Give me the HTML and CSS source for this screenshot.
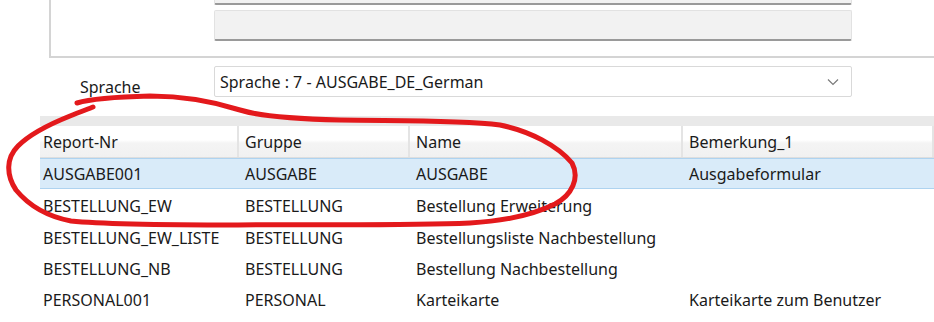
FILE: index.html
```html
<!DOCTYPE html>
<html lang="de">
<head>
<meta charset="utf-8">
<title>Report-Auswahl</title>
<link rel="stylesheet" href="styles.css">
</head>
<body>
<div class="page">
  <div class="panel">
    <div class="field field-top"></div>
    <div class="field"></div>
  </div>

  <div class="lang-row">
    <div class="lang-label">Sprache</div>
    <div class="combo">
      <span class="combo-text">Sprache : 7 - AUSGABE_DE_German</span>
      <svg class="chev" width="12" height="8" viewBox="0 0 12 8"><path d="M1 1.5 L6 6.5 L11 1.5" fill="none" stroke="#7a7a7a" stroke-width="1.2"/></svg>
    </div>
  </div>

  <div class="grid">
    <div class="grid-top"></div>
    <div class="row head">
      <div class="cell">Report-Nr</div>
      <div class="cell">Gruppe</div>
      <div class="cell">Name</div>
      <div class="cell">Bemerkung_1</div>
    </div>
    <div class="row sel">
      <div class="cell">AUSGABE001</div>
      <div class="cell">AUSGABE</div>
      <div class="cell">AUSGABE</div>
      <div class="cell">Ausgabeformular</div>
    </div>
    <div class="row body-row">
      <div class="cell">BESTELLUNG_EW</div>
      <div class="cell">BESTELLUNG</div>
      <div class="cell">Bestellung Erweiterung</div>
      <div class="cell"></div>
    </div>
    <div class="row body-row">
      <div class="cell">BESTELLUNG_EW_LISTE</div>
      <div class="cell">BESTELLUNG</div>
      <div class="cell">Bestellungsliste Nachbestellung</div>
      <div class="cell"></div>
    </div>
    <div class="row body-row">
      <div class="cell">BESTELLUNG_NB</div>
      <div class="cell">BESTELLUNG</div>
      <div class="cell">Bestellung Nachbestellung</div>
      <div class="cell"></div>
    </div>
    <div class="row body-row">
      <div class="cell">PERSONAL001</div>
      <div class="cell">PERSONAL</div>
      <div class="cell">Karteikarte</div>
      <div class="cell">Karteikarte zum Benutzer</div>
    </div>
  </div>

  <svg class="markup" width="934" height="322" viewBox="0 0 934 322">
    <path d="M77 103 C 90 99, 110 97, 150 96 C 185 96, 215 102, 240 110 C 262 117, 300 119, 340 120 C 400 121, 460 120, 500 125 C 530 131, 558 146, 572 163 C 580 178, 572 195, 555 204 C 535 214, 505 221, 470 223 C 400 226, 300 224, 238 225 C 170 225, 100 224, 71 221 C 50 217, 30 207, 16 190 C 6 175, 6 158, 18 146 C 30 134, 50 124, 70 116 C 80 112, 88 109, 93 107" fill="none" stroke="#e3191c" stroke-width="5" stroke-linecap="round" stroke-linejoin="round"/>
  </svg>
</div>
</body>
</html>
```

FILE: styles.css
```css
html, body {
  margin: 0;
  padding: 0;
  background: #ffffff;
}

.page {
  position: relative;
  width: 934px;
  height: 322px;
  overflow: hidden;
  font-family: "Noto Sans", "Open Sans", sans-serif;
  font-size: 16px;
  color: #1a1a1a;
}

.panel {
  margin-left: 49px;
  height: 56px;
  border-left: 2px solid #d4d4d4;
  border-bottom: 2px solid #d4d4d4;
  padding-left: 163px;
  display: flex;
  flex-direction: column;
  gap: 5px;
}

.field {
  width: 636px;
  height: 28px;
  background: #f2f2f2;
  border: 1px solid #e2e2e2;
  border-bottom: 2px solid #9a9a9a;
  border-radius: 2px;
}

.field-top {
  margin-top: -26px;
}

.lang-row {
  display: flex;
  margin-top: 8px;
  height: 50px;
}

.lang-label {
  width: 134px;
  padding-left: 80px;
  padding-top: 10px;
  font-size: 16px;
}

.combo {
  border: 1px solid #d9d9d9;
  border-radius: 2px;
  background: #ffffff;
  display: flex;
  align-items: center;
  justify-content: space-between;
  padding: 0 12px 0 5px;
  box-sizing: border-box;
  width: 638px;
  height: 31px;
}

.combo-text {
  font-size: 16px;
}

.grid {
  margin-left: 40px;
}

.grid-top {
  height: 10px;
  background: #e9e9e9;
}

.row {
  display: grid;
  grid-template-columns: 199px 171px 273px 1fr;
  height: 31px;
  align-items: center;
}

.cell {
  padding-left: 6px;
  white-space: nowrap;
  font-size: 16px;
}

.cell:first-child {
  padding-left: 3px;
}

.head {
  height: 31px;
  background: linear-gradient(#ffffff 0%, #ffffff 45%, #f4f4f4 55%, #f1f1f1 100%);
  border-bottom: 1px solid #dedede;
}

.head .cell {
  height: 100%;
  display: flex;
  align-items: center;
  border-right: 2px solid #e4e4e4;
}

.sel {
  background: #d9ebf9;
  border-top: 1px solid #aed3f0;
  border-bottom: 1px solid #aed3f0;
  height: 29px;
}

.sel .cell {
  padding-top: 1px;
}

.body-row {
  height: 31.4px;
}

.body-row .cell {
  padding-top: 3px;
}

.markup {
  position: absolute;
  left: 0;
  top: 0;
  pointer-events: none;
}
```
